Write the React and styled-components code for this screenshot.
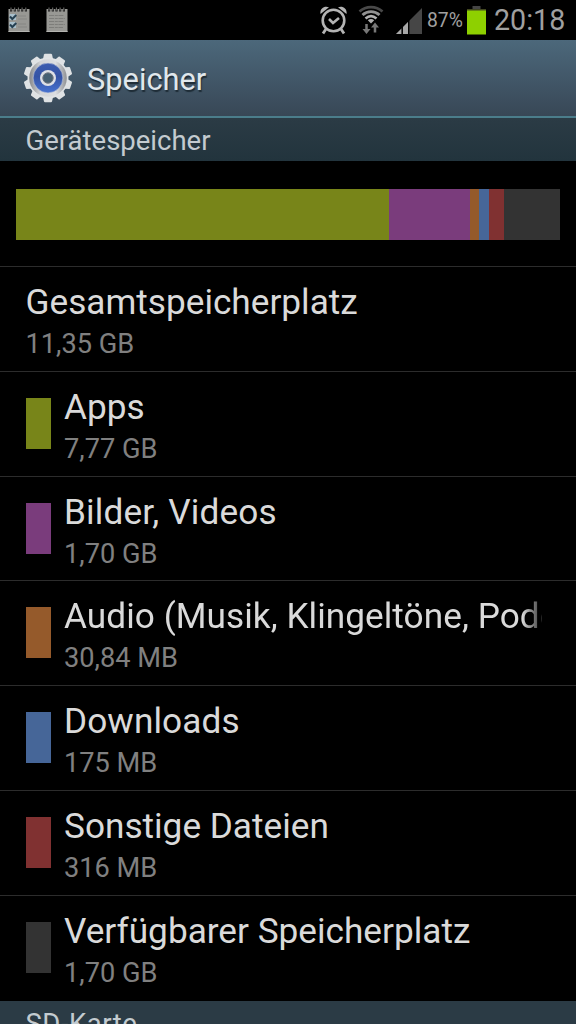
import styled, { createGlobalStyle } from "styled-components";

const categories = [
    { name: "Apps", size: "7,77 GB", color: "#788519", bar: 373 },
    { name: "Bilder, Videos", size: "1,70 GB", color: "#7a3c7c", bar: 80.5, spacing: 0.15 },
    { name: "Audio (Musik, Klingeltöne, Podcasts usw.)", size: "30,84 MB", color: "#955a2b", bar: 9.5, spacing: 0.05, fade: true },
    { name: "Downloads", size: "175 MB", color: "#466698", bar: 10, spacing: 0.1 },
    { name: "Sonstige Dateien", size: "316 MB", color: "#803131", bar: 15 },
    { name: "Verfügbarer Speicherplatz", size: "1,70 GB", color: "#333333", bar: 56 },
];

// ICONS --------------------------------------
const NoteIcon = ({ checks }) => {
    return (
        <svg width="22" height="26" viewBox="0 0 22 26">
            <rect x="0.5" y="2" width="21" height="23" fill="#989894" />
            <rect x="0.5" y="24" width="21" height="1" fill="#b4b4b0" />
            <path d="M2 3.3h18" stroke="#222" strokeWidth="2.6" strokeDasharray="2.2 1.5" />
            <path d="M3 .5v3M6.7 .5v3M10.4 .5v3M14.1 .5v3M17.8 .5v3" stroke="#777774" strokeWidth="1" />
            {checks ? (
                <>
                    <rect x="1.5" y="7" width="6.500" height="6" fill="#a9c0cc" />
                    <rect x="1.5" y="15" width="6.500" height="6" fill="#a9c0cc" />
                    <path d="M2 9.500l2.300 2.500 4-4M2 17.500l2.300 2.500 4-4" fill="none" stroke="#253f50" strokeWidth="2" />
                    <path d="M10 9h8M10 12h9M10 17h8M10 20h9" stroke="#868683" strokeWidth="1" />
                </>
            ) : (
                <path d="M3 8.5h15M3 11.5h16M3 14.5h15M3 17.5h16M3 20.5h14" stroke="#7d7d7a" strokeWidth="1" strokeDasharray="5 .8 3 .6" />
            )}
        </svg>
    );
};

const AlarmIcon = () => {
    return (
        <svg width="28" height="30" viewBox="0 0 28 30" fill="none" stroke="#b4b4b4">
            <circle cx="13.5" cy="15.5" r="10.8" strokeWidth="2.6" />
            <path d="M9 14l4 4 6-5" strokeWidth="2.6" />
            <path d="M6 24l-3 4.5M21 24l3 4.5" strokeWidth="2.8" />
            <path d="M.5 9C-.5 4 4 .3 9 2.300ZM26.5 9C27.500 4 23 .3 18 2.300Z" fill="#b4b4b4" stroke="none" />
        </svg>
    );
};

const WifiIcon = () => {
    return (
        <svg width="26" height="30" viewBox="0 0 26 30" fill="none">
            <path d="M1.5 6.5C8 .7 18 .7 24.5 6.5" stroke="#494949" strokeWidth="2.7" />
            <path d="M4.5 10C9.5 5.5 16.5 5.5 21.5 10" stroke="#929292" strokeWidth="2.9" />
            <path d="M7.5 13.5C11 10.5 15 10.5 18.5 13.5" stroke="#b0b0b0" strokeWidth="2.6" />
            <path d="M9.8 15.2C12 13.5 14 13.5 16.2 15.2L13 18.5Z" fill="#b0b0b0" />
            <path d="M8.5 19v6.5M17 27.5v-6" stroke="#777" strokeWidth="2.5" />
            <path d="M4.500 24h8l-4 5ZM13 22.5h8l-4-5Z" fill="#777" />
        </svg>
    );
};

const SignalIcon = () => {
    return (
        <svg width="26" height="26" viewBox="0 0 26 26">
            <path d="M0 26L26 0V26Z" fill="#464646" />
            <path d="M0 26L5.5 20.5V26ZM7 26V19L12 14V26Z" fill="#a8a8a8" />
            <path d="M6.250 19v7M12.7 12v14" stroke="#000" strokeWidth="1.3" />
        </svg>
    );
};

const BatteryIcon = () => {
    return (
        <svg width="19" height="29" viewBox="0 0 19 29">
            <rect x="5.5" y="0" width="8" height="3" fill="#454545" />
            <rect x="0" y="3" width="19" height="2" fill="#434820" />
            <rect x="0" y="4.5" width="19" height="24" fill="#8ed000" />
        </svg>
    );
};

const GearIcon = () => {
    const teeth = [0, 36, 72, 108, 144, 180, 216, 252, 288, 324];

    return (
        <svg width="50" height="50" viewBox="0 0 50 50">
            <defs>
                <linearGradient id="metal" x1="0" y1="0" x2="1" y2="0">
                    <stop offset="0" stopColor="#85878a" />
                    <stop offset="0.3" stopColor="#d3d5d8" />
                    <stop offset="0.7" stopColor="#dcdee1" />
                    <stop offset="1" stopColor="#8f9194" />
                </linearGradient>
                <linearGradient id="blue" x1="0" y1="0" x2="0" y2="1">
                    <stop offset="0" stopColor="#3c5cb0" />
                    <stop offset="0.45" stopColor="#3453a5" />
                    <stop offset="1" stopColor="#4672d0" />
                </linearGradient>
            </defs>
            {teeth.map((angle) => {
                return <path key={angle} d="M19.5 8L21 1.600Q21.200 .8 22 .8H28Q28.800 .8 29 1.600L30.5 8Z" fill="#dfe2e4" transform={`rotate(${angle} 25 25)`} />;
            })}
            <circle cx="25" cy="25" r="20.5" fill="#e0e3e5" />
            <circle cx="25" cy="25" r="18.8" fill="url(#metal)" />
            <circle cx="25" cy="25" r="14.9" fill="url(#blue)" stroke="#c4cad8" strokeWidth=".6" />
            <circle cx="25" cy="25" r="8" fill="#dde0e6" />
            <circle cx="25" cy="25" r="5.2" fill="#466073" stroke="#707680" strokeWidth="1" />
        </svg>
    );
};

// PAGE ---------------------------------------
const App = () => {
    return (
        <Screen>
            <GlobalStyle />
            <StatusBar>
                <Notifications>
                    <NoteIcon checks />
                    <NoteIcon />
                </Notifications>
                <SystemIcons>
                    <AlarmIcon />
                    <WifiIcon />
                    <SignalIcon />
                    <Percent>87%</Percent>
                    <BatteryIcon />
                    <Clock>20:18</Clock>
                </SystemIcons>
            </StatusBar>

            <ActionBar>
                <GearIcon />
                <h1>Speicher</h1>
            </ActionBar>

            <SectionHeader>Gerätespeicher</SectionHeader>
            <UsageRow>
                <UsageBar>
                    {categories.map((cat) => {
                        return <Segment key={cat.name} $color={cat.color} $share={cat.bar} />;
                    })}
                </UsageBar>
            </UsageRow>

            <Row>
                <RowText>
                    <Name>Gesamtspeicherplatz</Name>
                    <Size>11,35 GB</Size>
                </RowText>
            </Row>
            {categories.map((cat) => {
                return (
                    <Row key={cat.name}>
                        <Swatch $color={cat.color} />
                        <RowText>
                            <Name $fade={cat.fade} $spacing={cat.spacing}>{cat.name}</Name>
                            <Size>{cat.size}</Size>
                        </RowText>
                    </Row>
                );
            })}
            <SectionHeader $last>SD-Karte</SectionHeader>
        </Screen>
    );
};

export default App;

const GlobalStyle = createGlobalStyle`
    * {
        box-sizing: border-box;
    }

    body {
        margin: 0;
        background: #000;
        font-family: Roboto, "Liberation Sans", sans-serif;
    }

    svg {
        display: block;
        flex: none;
    }
`;

const Screen = styled.div`
    display: flex;
    flex-direction: column;
    width: 576px;
    height: 1024px;
    overflow: hidden;
    background: #000;
`;

const StatusBar = styled.div`
    display: flex;
    flex: none;
    justify-content: space-between;
    height: 40px;
    padding: 0 10px 0 8px;
`;

const Notifications = styled.div`
    display: flex;
    gap: 16px;
    padding-top: 7px;
`;

const SystemIcons = styled.div`
    display: flex;
    align-items: center;

    svg:nth-child(1) {
        margin-right: 10px;
    }
    svg:nth-child(2) {
        margin-right: 12px;
    }
    svg:nth-child(3) {
        margin: 2px 5px 0 0;
    }
`;

const Percent = styled.span`
    width: 40px;
    color: #a0a0a0;
    font-size: 19.3px;
`;

const Clock = styled.span`
    width: 72px;
    margin-left: 8px;
    color: #a0a0a0;
    font-size: 28.6px;
    line-height: 40px;
`;

const ActionBar = styled.header`
    display: flex;
    flex: none;
    align-items: center;
    gap: 14px;
    height: 78px;
    padding: 0 23px 1px;
    border-bottom: 2px solid #4b7d8b;
    background: linear-gradient(#4c687b, #384756);

    h1 {
        margin: 4px 0 0;
        color: #e0e7ec;
        font-size: 30.8px;
        font-weight: 400;
        text-shadow: 1px 2px 1px #1e2c36;
    }
`;

const SectionHeader = styled.h2`
    flex: none;
    height: 43px;
    margin: 0;
    padding-left: 25.5px;
    background: ${(props) => (props.$last ? "#2b3b45" : "linear-gradient(#2b3b45, #22343d)")};
    color: #c3cbd0;
    font-size: 27.5px;
    font-weight: 400;
    line-height: 45px;
    letter-spacing: ${(props) => (props.$last ? "0.5px" : "normal")};
`;

const UsageRow = styled.div`
    flex: none;
    height: 105px;
    padding: 28px 16px 0;
`;

const UsageBar = styled.div`
    display: flex;
    height: 51px;
`;

const Segment = styled.div`
    flex: ${(props) => props.$share} 0 0;
    background: ${(props) => props.$color};
`;

const Row = styled.div`
    display: flex;
    flex: none;
    height: 104.75px;
    padding: 0 30px 0 25.5px;
    border-top: 1px solid #2c2c2c;

    &:nth-last-child(2) {
        height: 106.5px;
    }
`;

const Swatch = styled.div`
    flex: none;
    width: 25.5px;
    height: 51px;
    margin: 26px 13px 0 0;
    background: ${(props) => props.$color};
`;

const RowText = styled.div`
    flex: 1;
    min-width: 0;
    padding-top: 14px;
`;

const Name = styled.div`
    overflow: hidden;
    color: #dadada;
    font-size: 35.2px;
    line-height: 42px;
    letter-spacing: ${(props) => props.$spacing || 0}px;
    white-space: nowrap;
    ${(props) => props.$fade && `
        width: 478px;
        mask-image: linear-gradient(to right, #000 458px, transparent 484px);
    `}
`;

const Size = styled.div`
    color: #808080;
    font-size: 27.2px;
    line-height: 42px;
`;
